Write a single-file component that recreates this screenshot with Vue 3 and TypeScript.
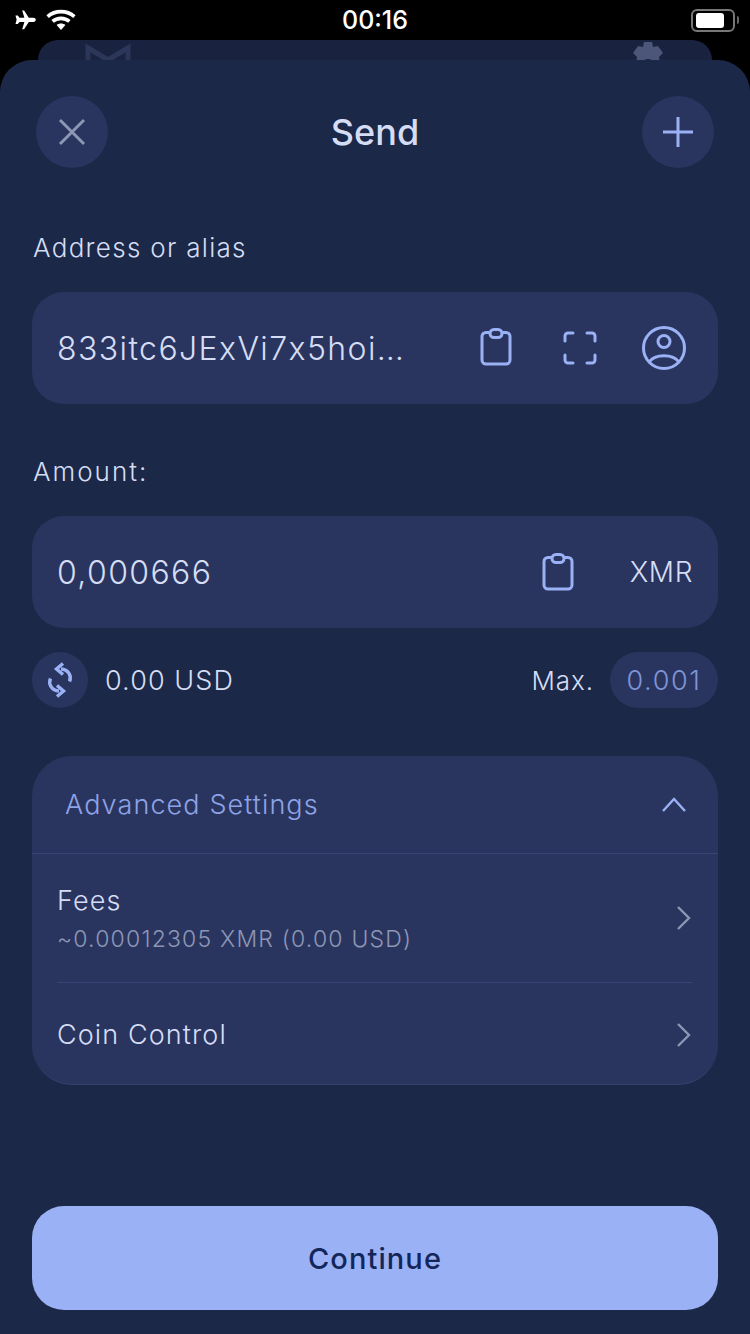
<template>
  <div class="screen">
    <header class="status-bar">
      <div class="status-left">
        <svg class="plane" width="22" height="20" viewBox="0 0 22 20">
          <path d="M8.2 0.4h1.9l4.7 7.3h4.6c1.3 0 2.4.9 2.4 2.1s-1.1 2.1-2.4 2.1h-4.6l-4.7 7.3H8.2l2.2-7.3H5.5l-1.7 2.2H1.5l1.1-4.3-1.1-4.2h2.3l1.7 2.1h4.9z" fill="#fff" />
        </svg>
        <svg class="wifi" width="30" height="22" viewBox="0 0 30 22" fill="none" stroke="#fff" stroke-width="3.6">
          <path d="M1.6 7.6C9 .9 21 .9 28.4 7.6" />
          <path d="M6.6 12.4c4.6-4.1 12.2-4.1 16.800 0" />
          <path d="M15 21l-4.4-5c2.4-2 6.4-2 8.8 0z" fill="#fff" stroke="none" />
        </svg>
      </div>
      <span class="clock">00:16</span>
      <div class="battery">
        <div class="battery-body"><div class="battery-fill"></div></div>
        <div class="battery-cap"></div>
      </div>
    </header>

    <div class="peek-card">
      <svg class="peek-logo" width="46" height="20" viewBox="0 0 46 20" fill="none" stroke="#2b3659" stroke-width="5">
        <path d="M3 22V6l20 12L43 6v16" />
      </svg>
      <svg class="peek-gear" width="38" height="20" viewBox="0 0 38 20">
        <path d="M15 0h8l1 5 5-1 5 7-4 4 1 5h-6a7.500 7.500 0 0 0-12 0H7l1-5-4-4 5-7 5 1z" fill="#4c5678" />
      </svg>
    </div>

    <main class="sheet">
      <div class="top-row">
        <button class="round-btn">
          <svg width="30" height="30" viewBox="0 0 30 30" stroke="#8d96b5" stroke-width="3" fill="none">
            <path d="M3 3l24 24M27 3L3 27" />
          </svg>
        </button>
        <h1 class="title">Send</h1>
        <button class="round-btn">
          <svg width="30" height="30" viewBox="0 0 30 30" stroke="#9bb1f5" stroke-width="3" fill="none">
            <path d="M15 0v30M0 15h30" />
          </svg>
        </button>
      </div>

      <label class="field-label label-address">Address or alias</label>
      <div class="field address-field">
        <span class="field-value address">833itc6JExVi7x5hoi…</span>
        <div class="field-icons">
          <svg class="clip" width="32" height="38" viewBox="0 0 32 38" fill="none" stroke="#9bb1f5" stroke-width="3">
            <path d="M10 4.500H6a4 4 0 0 0-4 4V32a4 4 0 0 0 4 4h20a4 4 0 0 0 4-4V8.500a4 4 0 0 0-4-4h-4" />
            <rect x="10" y="1.500" width="12" height="8" rx="4" />
          </svg>
          <svg class="scan" width="34" height="34" viewBox="0 0 34 34" fill="none" stroke="#9bb1f5" stroke-width="3" stroke-linecap="round">
            <path d="M10 2H5a3 3 0 0 0-3 3v5M24 2h5a3 3 0 0 1 3 3v5M2 24v5a3 3 0 0 0 3 3h5M32 24v5a3 3 0 0 1-3 3h-5" />
          </svg>
          <svg class="person" width="46" height="46" viewBox="0 0 46 46" fill="none" stroke="#9bb1f5" stroke-width="3">
            <circle cx="23" cy="23" r="20.500" />
            <circle cx="23" cy="16.500" r="6" />
            <path d="M8 37c6-8.500 24-8.500 30 0" />
          </svg>
        </div>
      </div>

      <label class="field-label label-amount">Amount:</label>
      <div class="field">
        <span class="field-value amount">0,000666</span>
        <svg class="clip amount-clip" width="32" height="38" viewBox="0 0 32 38" fill="none" stroke="#9bb1f5" stroke-width="3">
          <path d="M10 4.500H6a4 4 0 0 0-4 4V32a4 4 0 0 0 4 4h20a4 4 0 0 0 4-4V8.500a4 4 0 0 0-4-4h-4" />
          <rect x="10" y="1.500" width="12" height="8" rx="4" />
        </svg>
        <span class="currency">XMR</span>
      </div>

      <div class="convert-row">
        <div class="swap-btn">
          <svg width="28" height="36" viewBox="0 0 28 36" fill="none" stroke="#9bb1f5" stroke-width="3.400">
            <path d="M23.500 19.500c2.500-5.500-1-12-8.500-12.500" />
            <path d="M17 1.500L10.500 7l6.500 5.500" />
            <path d="M4.500 16.500C2 22 5.500 28.500 13 29" />
            <path d="M11 23.500l6.500 5.500-6.500 5.500" />
          </svg>
        </div>
        <span class="fiat">0.00 USD</span>
        <span class="max-label">Max.</span>
        <span class="max-pill">0.001</span>
      </div>

      <section class="settings">
        <div class="settings-head">
          <span class="settings-title">Advanced Settings</span>
          <svg width="26" height="16" viewBox="0 0 26 16" fill="none" stroke="#9bb1f5" stroke-width="2.400">
            <path d="M2 14L13 2l11 12" />
          </svg>
        </div>
        <div class="settings-row fees">
          <div>
            <div class="row-title">Fees</div>
            <div class="row-sub">~0.00012305 XMR (0.00 USD)</div>
          </div>
          <svg class="chevron" width="16" height="26" viewBox="0 0 16 26" fill="none" stroke="#8d96b5" stroke-width="2.400">
            <path d="M2 2l11 11L2 24" />
          </svg>
        </div>
        <div class="settings-row coin">
          <div class="row-title">Coin Control</div>
          <svg class="chevron" width="16" height="26" viewBox="0 0 16 26" fill="none" stroke="#8d96b5" stroke-width="2.400">
            <path d="M2 2l11 11L2 24" />
          </svg>
        </div>
      </section>

      <button class="continue">Continue</button>
    </main>
  </div>
</template>

<script setup lang="ts">
</script>

<style scoped>
.screen {
  width: 750px;
  height: 1334px;
  background: #000;
  overflow: hidden;
  font-family: Inter, "Noto Sans", sans-serif;
  font-weight: 300;
  color: #d5ddf5;
}

.status-bar {
  height: 40px;
  display: flex;
  align-items: center;
  justify-content: space-between;
  padding: 0 11px 0 14px;
  position: relative;
}

.status-left {
  display: flex;
  align-items: center;
  gap: 10px;
}

.clock {
  position: absolute;
  left: 0;
  right: 0;
  text-align: center;
  color: #fff;
  font-size: 25px;
  font-weight: 500;
  top: 5px;
}

.battery {
  display: flex;
  align-items: center;
  gap: 2px;
}

.battery-body {
  width: 44px;
  height: 23px;
  border: 2px solid #777;
  border-radius: 6px;
  padding: 2px;
  box-sizing: border-box;
}

.battery-fill {
  width: 28px;
  height: 15px;
  background: #fff;
  border-radius: 3px;
  margin-left: 1px;
}

.battery-cap {
  width: 2px;
  height: 8px;
  background: #666;
  border-radius: 0 2px 2px 0;
}

.peek-card {
  height: 20px;
  margin: 0 38px;
  background: #192340;
  border-radius: 20px 20px 0 0;
  overflow: hidden;
  position: relative;
}

.peek-logo {
  position: absolute;
  left: 47px;
  top: 2px;
}

.peek-gear {
  position: absolute;
  right: 45px;
  top: 2px;
}

.sheet {
  height: 1274px;
  background: #1c2847;
  border-radius: 32px 32px 0 0;
  padding: 36px 32px 0;
  box-sizing: border-box;
}

.top-row {
  display: flex;
  align-items: center;
  justify-content: space-between;
  padding: 0 4px;
}

.round-btn {
  width: 72px;
  height: 72px;
  border: none;
  border-radius: 50%;
  background: #2a355f;
  display: flex;
  align-items: center;
  justify-content: center;
  padding: 0;
}

.title {
  margin: 0;
  font-size: 36px;
  font-weight: 500;
  color: #d5ddf5;
}

.field-label {
  display: block;
  font-size: 26px;
  line-height: 32px;
  color: #d5ddf5;
  padding-left: 1px;
}

.label-address {
  margin-top: 64px;
  margin-bottom: 28px;
  letter-spacing: 1.3px;
}

.label-amount {
  margin-top: 52px;
  margin-bottom: 28px;
  letter-spacing: 2px;
}

.field {
  height: 112px;
  background: #2a355f;
  border-radius: 32px;
  display: flex;
  align-items: center;
  padding: 0 25px;
}

.address-field {
  padding-right: 31px;
}

.field-value {
  font-size: 32px;
  letter-spacing: 1.4px;
  color: #d5ddf5;
  flex: 1;
}

.field-icons {
  display: flex;
  align-items: center;
  gap: 50px;
}

.field-icons .clip {
  margin-right: 1px;
  margin-bottom: 2px;
}

.field-icons .scan {
  margin-right: -6px;
}

.amount-clip {
  margin-right: 56px;
}

.currency {
  font-size: 28px;
  letter-spacing: 0.6px;
  color: #d5ddf5;
}

.convert-row {
  display: flex;
  align-items: center;
  height: 56px;
  margin-top: 24px;
}

.swap-btn {
  width: 56px;
  height: 56px;
  border-radius: 50%;
  background: #2a355f;
  display: flex;
  align-items: center;
  justify-content: center;
}

.fiat {
  font-size: 27px;
  letter-spacing: 1.1px;
  margin-left: 17px;
  flex: 1;
}

.max-label {
  font-size: 26px;
  letter-spacing: 0.9px;
  margin-right: 16px;
}

.max-pill {
  height: 56px;
  width: 108px;
  border-radius: 28px;
  background: #2a355f;
  color: #7f94d6;
  font-size: 27px;
  letter-spacing: 1.6px;
  display: flex;
  align-items: center;
  justify-content: center;
}

.settings {
  margin-top: 48px;
  background: #2a355f;
  border-radius: 40px;
  border-bottom: 1px solid #35406f;
  box-sizing: border-box;
  height: 329px;
}

.settings-head {
  height: 98px;
  box-sizing: border-box;
  border-bottom: 1px solid #384474;
  display: flex;
  align-items: center;
  justify-content: space-between;
  padding: 0 31px 0 33px;
}

.settings-title {
  font-size: 27px;
  letter-spacing: 1.1px;
  color: #8ea3e6;
}

.settings-row {
  display: flex;
  align-items: center;
  justify-content: space-between;
  margin: 0 26px 0 25px;
}

.fees {
  height: 129px;
  box-sizing: border-box;
  border-bottom: 1px solid #384474;
}

.coin {
  height: 103px;
}

.row-title {
  font-size: 27px;
  letter-spacing: 1.1px;
  color: #d5ddf5;
}

.row-sub {
  font-size: 23px;
  letter-spacing: 1.2px;
  color: #8d96b5;
  margin-top: 8px;
}

.continue {
  display: block;
  width: 100%;
  height: 104px;
  margin-top: 121px;
  background: #9bb1f5;
  border: none;
  border-radius: 32px;
  font-family: inherit;
  font-size: 29px;
  font-weight: 500;
  letter-spacing: 1.1px;
  color: #13265a;
}
</style>
